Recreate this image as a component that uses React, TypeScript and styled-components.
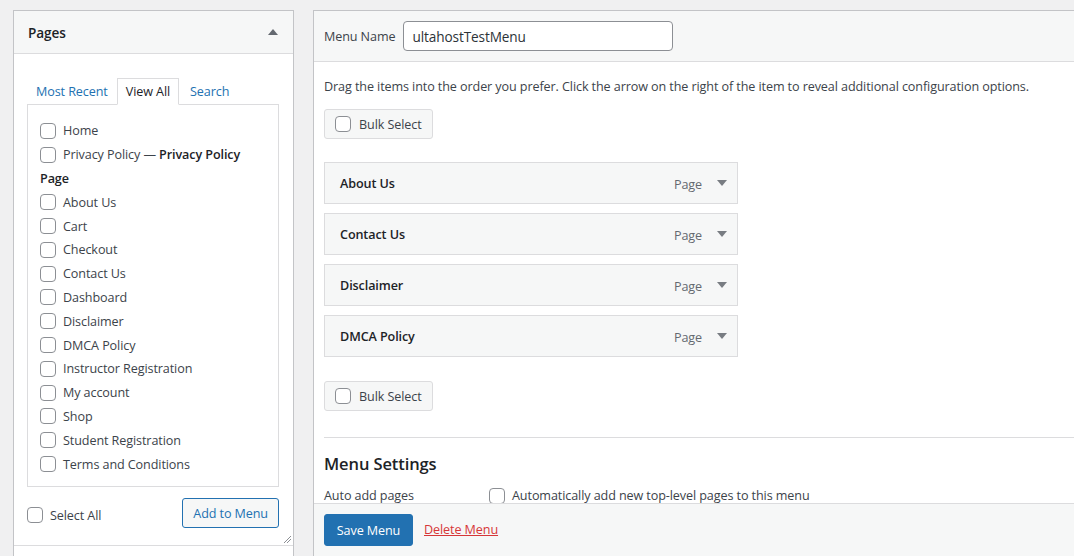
import React from 'react';
import styled, { createGlobalStyle } from 'styled-components';

const GlobalStyle = createGlobalStyle`
  html, body {
    margin: 0;
    padding: 0;
    background: #f0f0f1;
    overflow: hidden;
  }
  body {
    font-family: 'Open Sans', 'Noto Sans', sans-serif;
    font-size: 12.6px;
    letter-spacing: -0.1px;
    color: #3c434a;
  }
`;

const Page = styled.div`
  display: flex;
  align-items: flex-start;
  gap: 19px;
  padding: 10px 0 0 13px;
  height: 546px;
`;

/* ---------- left column ---------- */

const SidePanel = styled.div`
  flex: 0 0 281px;
  box-sizing: border-box;
  border: 1px solid #c3c4c7;
  border-bottom: none;
  background: #fff;
  height: 100%;
`;

const SideHeader = styled.div`
  display: flex;
  align-items: center;
  justify-content: space-between;
  height: 42px;
  padding: 0 15px 0 14px;
  background: #f6f7f7;
  border-bottom: 1px solid #dcdcde;
  h3 {
    margin: 0;
    font-size: 13.6px;
    font-weight: 600;
    color: #1d2327;
  }
`;

const Triangle = styled.span<{ up?: boolean; size?: number }>`
  display: inline-block;
  width: 0;
  height: 0;
  border-left: ${({ size = 5 }) => size}px solid transparent;
  border-right: ${({ size = 5 }) => size}px solid transparent;
  ${({ up, size = 5 }) =>
    up
      ? `border-bottom: ${size + 1}px solid #646970;`
      : `border-top: ${size + 1}px solid #787c82;`}
`;

const SideBody = styled.div`
  padding: 24px 14px 0 13px;
  position: relative;
  height: 492px;
  box-sizing: border-box;
  border-bottom: 1px solid #dcdcde;
`;

const Tabs = styled.div`
  display: flex;
  height: 26px;
  align-items: stretch;
`;

const Tab = styled.span<{ active?: boolean }>`
  display: flex;
  align-items: center;
  padding: 0 9px;
  color: ${({ active }) => (active ? '#1d2327' : '#2271b1')};
  box-sizing: border-box;
  ${({ active }) =>
    active
      ? `border: 1px solid #dcdcde; border-bottom: 1px solid #fff; background: #fff; margin-bottom: -1px; position: relative; height: 27px; padding: 0 8px; margin-right: 2px;`
      : ''}
`;

const ListBox = styled.div`
  border: 1px solid #dcdcde;
  padding: 14px 12px 10px 12px;
  height: 383px;
  box-sizing: border-box;
`;

const Row = styled.label`
  display: flex;
  align-items: center;
  gap: 7px;
  height: 23.8px;
  color: #3c434a;
`;

const GroupTitle = styled.div`
  display: flex;
  align-items: center;
  height: 23.8px;
  font-weight: 600;
  color: #1d2327;
`;

const Strong = styled.b`
  font-weight: 600;
  color: #1d2327;
`;

const Check = styled.span`
  display: inline-block;
  flex: 0 0 16px;
  width: 16px;
  height: 16px;
  box-sizing: border-box;
  border: 1px solid #8c8f94;
  border-radius: 4px;
  background: #fff;
`;

const ListFooter = styled.div`
  display: flex;
  align-items: center;
  justify-content: space-between;
  margin-top: 11px;
`;

const SelectAll = styled.label`
  display: flex;
  align-items: center;
  gap: 7px;
  margin-top: 4px;
`;

const SecondaryButton = styled.button<{ primaryText?: boolean }>`
  font-family: inherit;
  font-size: inherit;
  letter-spacing: inherit;
  height: 30px;
  padding: 0 10px;
  box-sizing: border-box;
  border-radius: 3px;
  background: #f6f7f7;
  cursor: pointer;
  border: 1px solid ${({ primaryText }) => (primaryText ? '#2271b1' : '#dcdcde')};
  color: ${({ primaryText }) => (primaryText ? '#2271b1' : '#3c434a')};
  display: inline-flex;
  align-items: center;
  gap: 8px;
`;

const Grip = styled.svg`
  position: absolute;
  right: 2px;
  bottom: 2px;
`;

/* ---------- right column ---------- */

const MainPanel = styled.div`
  flex: 0 0 800px;
  box-sizing: border-box;
  border: 1px solid #c3c4c7;
  border-bottom: none;
  background: #fff;
  height: 100%;
  display: flex;
  flex-direction: column;
`;

const MainHeader = styled.div`
  flex-shrink: 0;
  display: flex;
  align-items: center;
  gap: 8px;
  height: 50px;
  padding: 0 10px;
  background: #f6f7f7;
  border-bottom: 1px solid #dcdcde;
`;

const NameInput = styled.input`
  width: 270px;
  height: 30px;
  box-sizing: border-box;
  border: 1px solid #8c8f94;
  border-radius: 4px;
  padding: 0 8px;
  font-family: inherit;
  font-size: 13.6px;
  letter-spacing: -0.1px;
  color: #2c3338;
`;

const MainBody = styled.div`
  flex-shrink: 0;
  height: 441px;
  overflow: hidden;
  padding: 0 0 0 10px;
  box-sizing: border-box;
`;

const Hint = styled.p`
  margin: 15px 0 13px;
  line-height: 19px;
`;

const MenuList = styled.div`
  display: flex;
  flex-direction: column;
  gap: 9px;
  margin: 23px 0 24px;
  width: 414px;
`;

const MenuItem = styled.div`
  display: flex;
  align-items: center;
  height: 42px;
  box-sizing: border-box;
  border: 1px solid #dcdcde;
  background: #f6f7f7;
  padding: 0 10px 0 15px;
  strong {
    flex: 1;
    font-weight: 600;
    color: #1d2327;
  }
  span.type {
    color: #646970;
    margin-right: 15px;
    margin-top: 2px;
  }
`;

const Divider = styled.hr`
  border: none;
  border-top: 1px solid #dcdcde;
  margin: 26px 0 0;
`;

const SettingsTitle = styled.h3`
  margin: 14px 0 12px;
  font-size: 16.5px;
  font-weight: 600;
  color: #1d2327;
`;

const SettingRow = styled.div`
  display: flex;
  align-items: center;
  span.label {
    width: 165px;
  }
  label {
    display: flex;
    align-items: center;
    gap: 7px;
  }
`;

const MainFooter = styled.div`
  flex: 1;
  min-height: 0;
  display: flex;
  align-items: flex-start;
  gap: 11px;
  padding: 10px 10px 0;
  background: #f6f7f7;
  border-top: 1px solid #dcdcde;
`;

const PrimaryButton = styled.button`
  font-family: inherit;
  font-size: inherit;
  letter-spacing: inherit;
  height: 32px;
  width: 89px;
  padding: 0;
  background: #2271b1;
  border: 1px solid #2271b1;
  border-radius: 3px;
  color: #fff;
`;

const DangerLink = styled.a`
  color: #d63638;
  text-decoration: underline;
  line-height: 32px;
`;

const pages = [
  'About Us',
  'Cart',
  'Checkout',
  'Contact Us',
  'Dashboard',
  'Disclaimer',
  'DMCA Policy',
  'Instructor Registration',
  'My account',
  'Shop',
  'Student Registration',
  'Terms and Conditions',
];

const menuItems = ['About Us', 'Contact Us', 'Disclaimer', 'DMCA Policy'];

function BulkSelect() {
  return (
    <SecondaryButton>
      <Check />
      Bulk Select
    </SecondaryButton>
  );
}

export default function App(): JSX.Element {
  return (
    <>
      <GlobalStyle />
      <Page>
        <SidePanel>
          <SideHeader>
            <h3>Pages</h3>
            <Triangle up />
          </SideHeader>
          <SideBody>
            <Tabs>
              <Tab>Most Recent</Tab>
              <Tab active>View All</Tab>
              <Tab>Search</Tab>
            </Tabs>
            <ListBox>
              <Row>
                <Check />
                Home
              </Row>
              <Row>
                <Check />
                <span>
                  Privacy Policy — <Strong>Privacy Policy</Strong>
                </span>
              </Row>
              <GroupTitle>Page</GroupTitle>
              {pages.map((p) => (
                <Row key={p}>
                  <Check />
                  {p}
                </Row>
              ))}
            </ListBox>
            <ListFooter>
              <SelectAll>
                <Check />
                Select All
              </SelectAll>
              <SecondaryButton primaryText>Add to Menu</SecondaryButton>
            </ListFooter>
            <Grip width="8" height="8" viewBox="0 0 8 8">
              <path d="M1 8 L8 1 M4 8 L8 4" stroke="#8c8f94" strokeWidth="1" />
            </Grip>
          </SideBody>
        </SidePanel>

        <MainPanel>
          <MainHeader>
            <span>Menu Name</span>
            <NameInput defaultValue="ultahostTestMenu" />
          </MainHeader>
          <MainBody>
            <Hint>
              Drag the items into the order you prefer. Click the arrow on the right of the item to reveal
              additional configuration options.
            </Hint>
            <BulkSelect />
            <MenuList>
              {menuItems.map((m) => (
                <MenuItem key={m}>
                  <strong>{m}</strong>
                  <span className="type">Page</span>
                  <Triangle size={5} />
                </MenuItem>
              ))}
            </MenuList>
            <BulkSelect />
            <Divider />
            <SettingsTitle>Menu Settings</SettingsTitle>
            <SettingRow>
              <span className="label">Auto add pages</span>
              <label>
                <Check />
                Automatically add new top-level pages to this menu
              </label>
            </SettingRow>
          </MainBody>
          <MainFooter>
            <PrimaryButton>Save Menu</PrimaryButton>
            <DangerLink href="#">Delete Menu</DangerLink>
          </MainFooter>
        </MainPanel>
      </Page>
    </>
  );
}
